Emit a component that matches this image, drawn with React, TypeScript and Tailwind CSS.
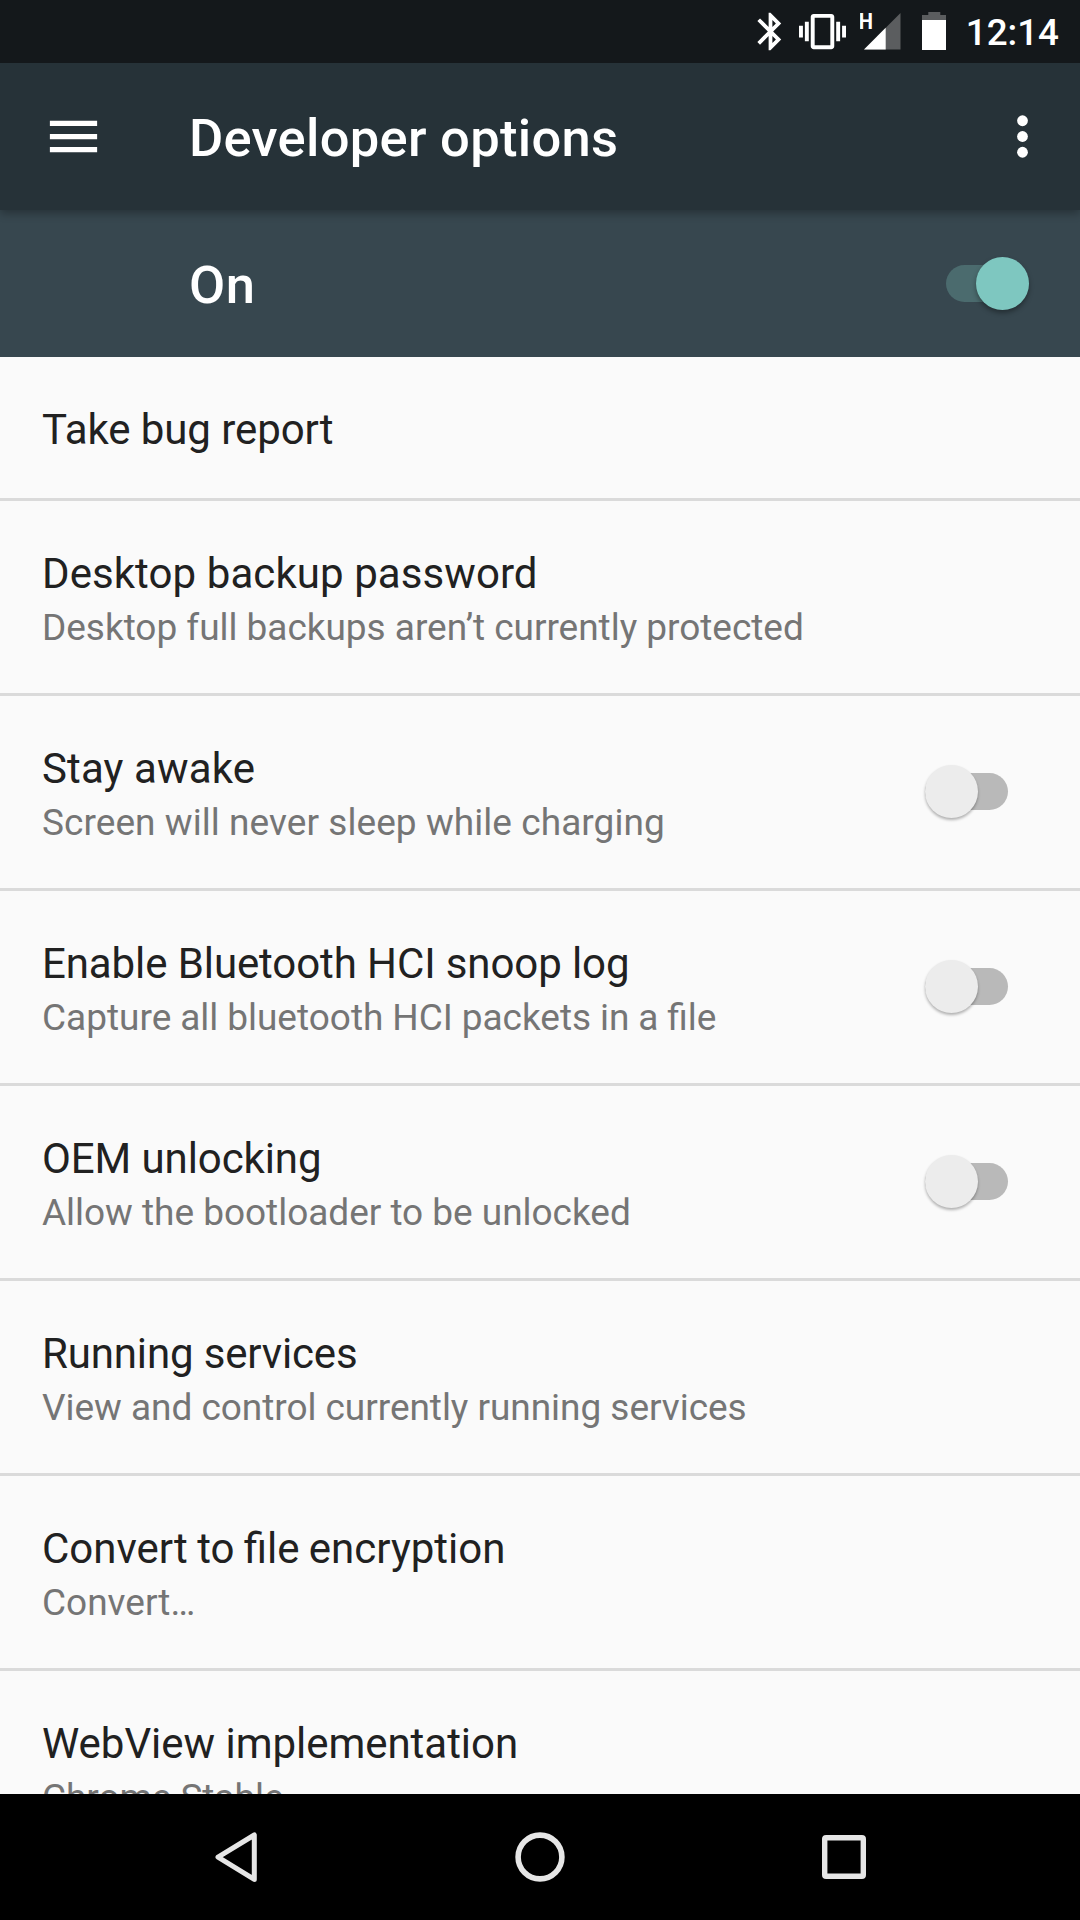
type Option = { title: string; titleSpacing: string; summary?: string; summarySpacing?: string; toggle?: boolean };

const options: Option[] = [
  { title: 'Take bug report', titleSpacing: 'tracking-[-0.08px]' },
  {
    title: 'Desktop backup password',
    titleSpacing: 'tracking-[0.08px]',
    summary: 'Desktop full backups aren’t currently protected',
    summarySpacing: 'tracking-[-0.03px]',
  },
  {
    title: 'Stay awake',
    titleSpacing: 'tracking-[0.12px]',
    summary: 'Screen will never sleep while charging',
    summarySpacing: 'tracking-[0.06px]',
    toggle: true,
  },
  {
    title: 'Enable Bluetooth HCI snoop log',
    titleSpacing: 'tracking-[-0.1px]',
    summary: 'Capture all bluetooth HCI packets in a file',
    summarySpacing: '[word-spacing:-0.3px]',
    toggle: true,
  },
  {
    title: 'OEM unlocking',
    titleSpacing: 'tracking-[-0.09px]',
    summary: 'Allow the bootloader to be unlocked',
    summarySpacing: 'tracking-[-0.03px]',
    toggle: true,
  },
  {
    title: 'Running services',
    titleSpacing: 'tracking-[-0.15px]',
    summary: 'View and control currently running services',
    summarySpacing: 'tracking-[-0.04px]',
  },
  {
    title: 'Convert to file encryption',
    titleSpacing: '[word-spacing:-1.1px]',
    summary: 'Convert…',
    summarySpacing: 'tracking-normal',
  },
  {
    title: 'WebView implementation',
    titleSpacing: 'tracking-[-0.03px]',
    summary: 'Chrome Stable',
    summarySpacing: 'tracking-[-0.08px]',
  },
];

function StatusBar() {
  return (
    <div className="flex h-[63px] shrink-0 items-center justify-end bg-[#14181b] pr-[21px] text-white">
      <svg className="mr-[6px] size-[45px]" viewBox="0 0 24 24" fill="currentColor">
        <path d="M17.71 7.71L12 2h-1v7.59L6.41 5 5 6.41 10.59 12 5 17.59 6.41 19 11 14.41V22h1l5.71-5.71-4.3-4.29 4.3-4.29zM13 5.83l1.88 1.88L13 9.59V5.83zm1.88 10.46L13 18.17v-3.76l1.88 1.88z" />
      </svg>
      <svg className="mr-[14px] size-[47px]" viewBox="0 0 24 24" fill="currentColor">
        <path d="M0 15h2V9H0v6zm3 2h2V7H3v10zm19-8v6h2V9h-2zm-3 8h2V7h-2v10zM16.5 3h-9C6.67 3 6 3.67 6 4.5v15c0 .83.67 1.5 1.5 1.5h9c.83 0 1.5-.67 1.5-1.5v-15c0-.83-.67-1.5-1.5-1.5zM16 19H8V5h8v14z" />
      </svg>
      <svg className="mr-[21px] h-[63px] w-[41px]" viewBox="0 0 41 63">
        <path d="M40.5 13v36.5H4z" fill="#5b5d5f" />
        <path d="M25.7 27.8v21.7H4z" fill="#fff" />
        <text x="-1.2" y="29" fontSize="21.8" fontWeight="700" fill="#fff" textLength="14.2" lengthAdjust="spacingAndGlyphs">H</text>
      </svg>
      <svg className="mr-[20px] h-[63px] w-[24px]" viewBox="0 0 24 63">
        <path d="M6.3 12h12v3H24v5H0v-5h6.3z" fill="#5b5d5f" />
        <path d="M0 20h24v30H0z" fill="#fff" />
      </svg>
      <span className="pt-[3px] text-[36.75px] leading-[44px] font-medium">12:14</span>
    </div>
  );
}

function Toggle({ on = false }: { on?: boolean }) {
  return (
    <div className={on ? 'relative flex h-[53px] w-[83px] shrink-0 items-center' : 'relative mb-[1px] flex h-[53px] w-[83px] shrink-0 items-center'}>
      <div className={on ? 'h-[37px] w-full rounded-full bg-[#4b6b6e]' : 'h-[37px] w-full rounded-full bg-[#b9b9b9]'} />
      <div
        className={
          on
            ? 'absolute top-0 right-0 size-[53px] rounded-full bg-[#7ec7c0] shadow-[0_3px_5px_rgba(0,0,0,0.35)]'
            : 'absolute top-0 left-0 size-[53px] rounded-full bg-[#ececec] shadow-[0_2px_3px_rgba(0,0,0,0.3)]'
        }
      />
    </div>
  );
}

function Row({ title, titleSpacing, summary, summarySpacing, toggle }: Option) {
  return (
    <div
      className={
        summary
          ? 'flex h-[195px] shrink-0 items-center justify-between border-b-3 border-[#dadada] pr-[72px] pl-[42px]'
          : 'flex h-[144px] shrink-0 items-center justify-between border-b-3 border-[#dadada] pr-[72px] pl-[42px]'
      }
    >
      <div className="pt-[4px]">
        <div className={`text-[42px] leading-[56px] text-[#212121] ${titleSpacing}`}>{title}</div>
        {summary && (
          <div className={`-mb-[2px] text-[37px] leading-[52px] text-[#757575] ${summarySpacing}`}>{summary}</div>
        )}
      </div>
      {toggle && <Toggle />}
    </div>
  );
}

export default function App() {
  return (
    <div className="flex h-[1920px] w-[1080px] flex-col overflow-hidden bg-[#fafafa] font-['Roboto',sans-serif]">
      <StatusBar />
      <header className="z-10 flex h-[147px] shrink-0 items-center bg-[#263238] pr-[26px] pl-[42px] text-white shadow-[0_3px_9px_rgba(0,0,0,0.32)] [clip-path:inset(0_0_-20px_0)]">
        <svg className="size-[63px]" viewBox="0 0 24 24" fill="currentColor">
          <path d="M3 18h18v-2H3v2zm0-5h18v-2H3v2zm0-7v2h18V6H3z" />
        </svg>
        <h1 className="ml-[84px] flex-1 pt-[2px] text-[52.5px] leading-[62px] font-medium tracking-[0.28px]">Developer options</h1>
        <svg className="size-[63px]" viewBox="0 0 24 24" fill="currentColor">
          <circle cx="12" cy="6" r="2.05" />
          <circle cx="12" cy="12" r="2.05" />
          <circle cx="12" cy="18" r="2.05" />
        </svg>
      </header>
      <div className="flex h-[147px] shrink-0 items-center justify-between bg-[#37474f] pr-[51px] pl-[189px]">
        <span className="pt-[2px] text-[52.5px] leading-[62px] font-medium tracking-[0.5px] text-white">On</span>
        <Toggle on />
      </div>
      <main className="flex min-h-0 flex-1 flex-col overflow-hidden">
        {options.map((o) => (
          <Row key={o.title} {...o} />
        ))}
      </main>
      <nav className="flex h-[126px] shrink-0 items-center justify-center bg-black">
        {[
          <path key="back" d="M50.3 10v44.4L14 32.1z" strokeWidth="5" />,
          <circle key="home" cx="32" cy="32" r="21.9" strokeWidth="5.6" />,
          <rect key="recent" x="12.7" y="12.7" width="38.6" height="38.6" rx="1.4" strokeWidth="5.4" />,
        ].map((shape, i) => (
          <div key={i} className="flex w-[304px] justify-center">
            <svg className="size-[64px]" viewBox="0 0 64 64" fill="none" stroke="#e6e6e6" strokeLinejoin="round">
              {shape}
            </svg>
          </div>
        ))}
      </nav>
    </div>
  );
}
